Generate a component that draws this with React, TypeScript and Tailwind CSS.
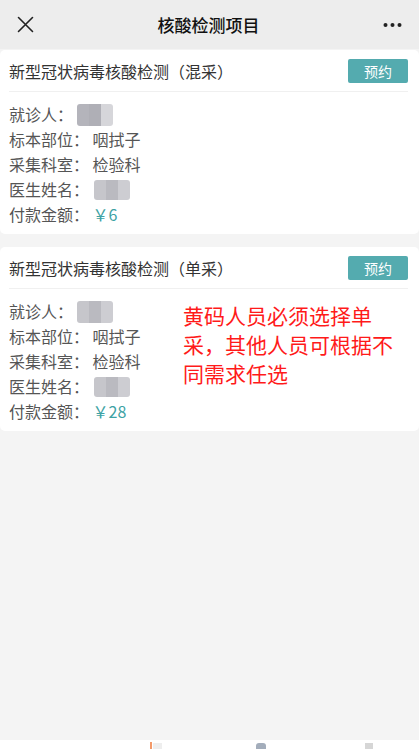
import React from "react";

const font = { fontFamily: '"Noto Sans CJK SC", "Noto Sans", sans-serif' };

function Mosaic({ w, h, ml, variant }: { w: number; h: number; ml: number; variant: number }) {
  const cols =
    variant === 0
      ? ["#b4b4bb", "#afafb6", "#d6d6da"]
      : ["#c6c6cb", "#babac0", "#cdcdd2"];
  return (
    <span
      className="inline-flex align-middle overflow-hidden rounded-[3px] blur-[0.5px]"
      style={{ width: w, height: h, marginLeft: ml }}
    >
      {cols.map((c, i) => (
        <span key={i} className="flex-1 h-full" style={{ background: c }} />
      ))}
    </span>
  );
}

function Card({
  title,
  price,
  mosaics,
  note,
}: {
  title: string;
  price: string;
  mosaics: [number, number];
  note?: boolean;
}) {
  return (
    <div className="bg-white rounded-[5px] pl-[9px] pr-[11px] pb-[7px]">
      <div className="h-[41px] flex items-center justify-between">
        <span className="text-[16px] text-[#333] leading-none">{title}</span>
        <button className="w-[60px] h-[24px] rounded-[2px] bg-[#54abaf] text-white text-[14px] leading-none flex items-center justify-center">
          预约
        </button>
      </div>
      <div className="h-px bg-[#f0f0f0]" />
      <div className="flex pt-[10px]">
        <div className="w-[174px] text-[16px] text-[#555] leading-[25px]">
          <div className="flex items-center h-[25px]">
            <span>就诊人：</span>
            <Mosaic w={36} h={22} ml={4} variant={mosaics[0]} />
          </div>
          <div className="h-[25px]">标本部位：&nbsp;咽拭子</div>
          <div className="h-[25px]">采集科室：&nbsp;检验科</div>
          <div className="flex items-center h-[25px]">
            <span>医生姓名：</span>
            <Mosaic w={36} h={20} ml={5} variant={mosaics[1]} />
          </div>
          <div className="h-[25px]">
            付款金额：&nbsp;<span className="text-[#3da2a4]">￥{price}</span>
          </div>
        </div>
        {note && (
          <div className="text-[#ff1a1a] text-[21px] leading-[29px] mt-[2px]">
            黄码人员必须选择单
            <br />
            采，其他人员可根据不
            <br />
            同需求任选
          </div>
        )}
      </div>
    </div>
  );
}

export default function App() {
  return (
    <div className="w-[419px] h-[749px] bg-[#f4f4f4] flex flex-col overflow-hidden" style={font}>
      <div className="h-[49px] bg-[#ededed] flex items-center justify-between px-[17px] shrink-0">
        <svg width="17" height="17" viewBox="0 0 17 17">
          <path d="M1.5 1.5 L15.5 15.5 M15.5 1.5 L1.5 15.5" stroke="#222" strokeWidth="1.6" strokeLinecap="round" />
        </svg>
        <span className="text-[17px] font-medium text-[#111] leading-none">核酸检测项目</span>
        <svg width="19" height="6" viewBox="0 0 19 6">
          <circle cx="2.5" cy="3" r="2" fill="#222" />
          <circle cx="9.5" cy="3" r="2" fill="#222" />
          <circle cx="16.5" cy="3" r="2" fill="#222" />
        </svg>
      </div>
      <div className="mt-px flex flex-col gap-[13px]">
        <Card title="新型冠状病毒核酸检测（混采）" price="6" mosaics={[0, 1]} />
        <Card title="新型冠状病毒核酸检测（单采）" price="28" mosaics={[1, 1]} note />
      </div>
      <div className="flex-1" />
      <div className="h-[9px] bg-white shrink-0 relative">
        <span className="absolute left-[150px] top-[2px] w-[2px] h-[7px] bg-[#f39a6a]" />
        <span className="absolute left-[153px] top-[3px] w-[9px] h-[6px] bg-[#eeeeee]" />
        <span className="absolute left-[256px] top-[3px] w-[10px] h-[6px] bg-[#a3adbb] rounded-t-[3px]" />
        <span className="absolute left-[365px] top-[3px] w-[8px] h-[6px] bg-[#d6d6d6]" />
      </div>
    </div>
  );
}
